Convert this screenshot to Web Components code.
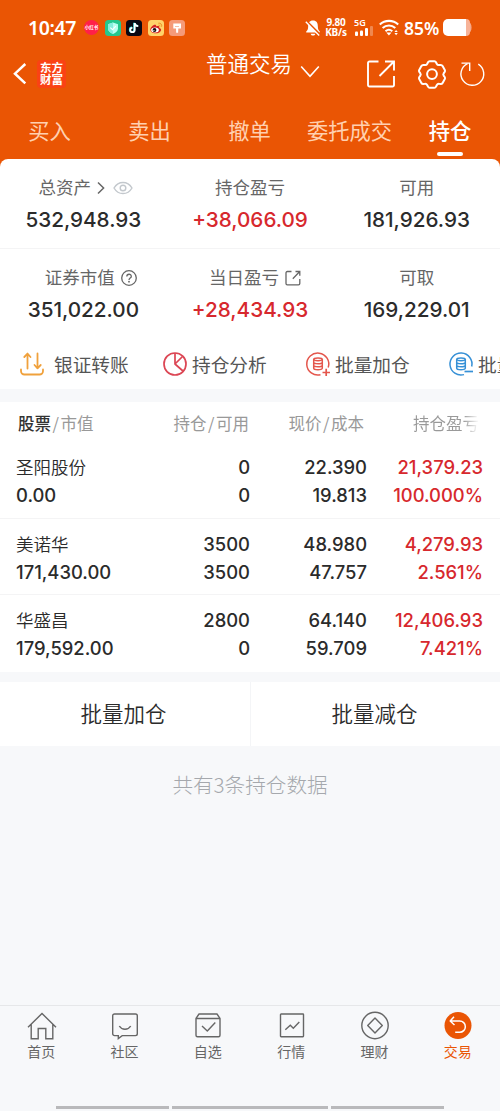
<!DOCTYPE html>
<html lang="zh-CN">
<head>
<meta charset="UTF-8">
<meta name="viewport" content="width=device-width, initial-scale=1.0">
<title>普通交易 - 持仓</title>
<style>
  body {
    margin: 0;
    background: #f7f8fa;
    font-family: "Noto Sans CJK SC", sans-serif;
  }
</style>
</head>
<body>
<trade-app></trade-app>

<script>
// Semua ikon SVG: [viewBox width, viewBox height, isi]
const ICONS = {
  redbook: [15, 15, `<circle cx="7.5" cy="7.5" r="7.5" fill="#ff2049"/>`],
  shield: [16, 16, `<rect width="16" height="16" rx="3.5" fill="#25c78d"/><path d="M8 2.6l5 1.6v4c0 3-2.300 4.700-5 5.700-2.700-1-5-2.700-5-5.700v-4z" fill="#b9fff0"/><path d="M8 2.600v11.300c-2.700-1-5-2.700-5-5.700v-4z" fill="#86eedd"/><path d="M5.300 7.600l2.300 2 3.200-3.400" fill="none" stroke="#fff" stroke-width="1.200"/>`],
  tiktok: [16, 16, `<rect width="16" height="16" rx="3.5" fill="#0a0712"/><path d="M8.700 3v7a2.200 2.200 0 1 1-2.200-2.200M8.700 3.200c.3 1.800 1.500 2.900 3.600 3" fill="none" stroke="#39e5e5" stroke-width="1.900" transform="translate(-.5 -.3)"/><path d="M8.700 3v7a2.200 2.200 0 1 1-2.200-2.200M8.700 3.200c.3 1.800 1.500 2.900 3.600 3" fill="none" stroke="#fff" stroke-width="1.800"/>`],
  weibo: [16, 16, `<rect width="16" height="16" rx="3.5" fill="#ffd36b"/><path d="M2.300 9.500c0-2.300 3.500-5.500 5.200-4.700.8.300.6 1.200.5 1.700 1.600-.7 3.600-.6 3.200 1.200 4 1.500 1.300 5.600-3.600 5.600-3 0-5.300-1.500-5.300-3.800z" fill="#d52420"/><ellipse cx="7" cy="9.900" rx="3.900" ry="2.500" fill="#fff"/><circle cx="6.500" cy="10" r="1.900" fill="#171010"/><circle cx="5.900" cy="10.500" r=".6" fill="#fff"/><path d="M10.300 3.200c2.300-.4 3.900 1.300 3.300 3.500M10.500 5.100c1-.2 1.600.5 1.400 1.400" fill="none" stroke="#eb9228" stroke-width="1"/>`],
  brush: [16, 16, `<rect width="16" height="16" rx="3.500" fill="#f59a79"/><path d="M4.300 3.500h7.700v5H9.300l-.2 4.300H7.200L7 8.500H4.300z" fill="#fff"/><path d="M6 6.500h4" stroke="#f6ad92" stroke-width=".8"/>`],
  bell: [16, 18, `<path d="M8 1.600c-3.500 0-4.800 2.500-4.800 5.300 0 3.500-1 4.600-2 5.700v1h13.600v-1c-1-1.100-2-2.200-2-5.700 0-2.800-1.300-5.300-4.800-5.300zM5.600 14.700h4.800c-.4 1.300-1.200 1.900-2.400 1.900s-2-.6-2.400-1.900z" fill="#fff"/><path d="M1.200 1.800l14 14" stroke="#ea5504" stroke-width="2"/><path d="M.8 2.800l13.400 13.600" stroke="#fff" stroke-width="1.400"/>`],
  signal: [20, 9, `<g fill="#fff"><rect x="1" y="4.500" width="3" height="4.500" rx="1"/><rect x="6" y="3.500" width="3" height="5.500" rx="1"/><rect x="11" y="1" width="3" height="8" rx="1"/><rect x="16" y="-1" width="3" height="10" rx="1" opacity=".3"/></g>`],
  wifi: [20, 17, `<g fill="none" stroke="#fff" stroke-width="2.100"><path d="M.8 5.500c5.200-4.800 13.200-4.800 18.400 0M3.600 9c3.700-3.300 9-3.300 12.700 0"/><path d="M6.500 12.200c2-1.700 4.800-1.700 6.800 0"/></g><path d="M7.300 13.600h5.200l-2.600 2.900zM15.400 13.100l1.700-2 1.700 2zM15.400 14.100h3.400l-1.700 2.100z" fill="#fff"/>`],
  battery: [29, 17, `<path d="M25.500 3.500l2 .7c1.400 2.600 1.400 6 0 8.600l-2 .7z" fill="#f5a98a"/><rect x="19" width="8" height="17" rx="4" fill="#f7b398"/><path d="M5 0h18v17H5a5 5 0 0 1-5-5V5a5 5 0 0 1 5-5z" fill="#fff"/>`],
  back: [14, 24, `<path d="M12.300 2L2 11.700l10.300 9.600" fill="none" stroke="#fff" stroke-width="2.500"/>`],
  down: [20, 13, `<path d="M1.200 1.500l8.800 9.700 8.800-9.700" fill="none" stroke="#fff" stroke-width="1.600"/>`],
  share: [28, 28, `<g fill="none" stroke="#fff" stroke-width="1.900"><path d="M11.500 1.500h-9a1.500 1.500 0 0 0-1.500 1.500v22a1.500 1.500 0 0 0 1.500 1.500h23a1.500 1.500 0 0 0 1.500-1.500v-9"/><path d="M18 1.500h9v9M26.500 2L12.500 16"/></g>`],
  gear: [30, 28, `<g fill="none" stroke="#fff" stroke-width="2" stroke-linejoin="round"><path d="M11 2.300c.4-.8.800-1.100 1.600-1.100h4.800c.8 0 1.200.3 1.600 1.100l.7 1.400c.5 1 1.300 1.500 2.400 1.400l1.700-.1c.9 0 1.400.3 1.800 1l2.200 3.900c.4.8.4 1.300-.1 2l-.9 1.200c-.7.900-.7 1.800 0 2.700l.9 1.200c.5.700.5 1.200.1 2l-2.200 3.900c-.4.700-.9 1-1.800 1l-1.700-.1c-1.100-.1-1.900.4-2.400 1.400l-.7 1.400c-.4.800-.8 1.100-1.600 1.100h-4.800c-.8 0-1.200-.3-1.600-1.100l-.7-1.400c-.5-1-1.300-1.500-2.400-1.400l-1.700.1c-.9 0-1.400-.3-1.800-1l-2.200-3.900c-.4-.8-.4-1.300.1-2l.9-1.200c.7-.9.700-1.800 0-2.700l-.9-1.200c-.5-.7-.5-1.200-.1-2l2.200-3.900c.4-.7.900-1 1.800-1l1.700.1c1.100.1 1.900-.4 2.400-1.400z"/><circle cx="15" cy="14.100" r="4.900"/></g>`],
  reload: [26, 26, `<g fill="none" stroke="#fff" stroke-width="1.400"><path d="M19.300 3.200A11.400 11.400 0 1 1 8.500 2.600"/><path d="M2.500 2.100h8.200v8"/></g>`],
  arrow: [8, 14, `<path d="M1 1.500l5.600 5.500L1 12.500" fill="none" stroke="#666" stroke-width="1.500"/>`],
  eye: [20, 14, `<g fill="none" stroke="#c3c8cd" stroke-width="1.400"><path d="M1 7c4.400-7.400 13.600-7.400 18 0-4.400 7.400-13.600 7.400-18 0z"/><circle cx="10" cy="7" r="2.800"/></g>`],
  help: [16, 16, `<g fill="none" stroke="#666" stroke-width="1.300"><circle cx="8" cy="8" r="7.300"/><path d="M5.800 6.500c0-3 4.500-3 4.500-.1 0 1.700-2.300 1.700-2.300 3.500"/></g><circle cx="8" cy="11.700" r=".9" fill="#666"/>`],
  open: [16, 16, `<g fill="none" stroke="#666" stroke-width="1.300"><path d="M6.500 1.500H2.300A1.300 1.300 0 0 0 1 2.800v10.700a1.300 1.300 0 0 0 1.300 1.300h11.200a1.300 1.300 0 0 0 1.300-1.300V9"/><path d="M10.500 1.500h4.300v4.200M14.500 1.800L7.800 8.700"/></g>`],
  transfer: [24, 24, `<g fill="none" stroke="#f0a13c" stroke-width="1.800" stroke-linecap="round" stroke-linejoin="round"><path d="M1 17.500v1.600A3.400 3.400 0 0 0 4.400 22.500h15.200a3.400 3.400 0 0 0 3.400-3.400v-1.600"/><path d="M7.500 16.500V1.700L4.300 5M7.500 1.700L10.500 5M17.500 1.500v14.800M14.500 13l3 3.300 3.200-3.300"/></g>`],
  pie: [24, 24, `<g fill="none" stroke="#dc4654" stroke-width="1.700"><circle cx="12" cy="12" r="11"/><path d="M12 1v11l8.500 7.500M12 12l7.500-7.500" stroke-linejoin="round"/></g>`],
  plus: [24, 24, `<g fill="none" stroke="#e4564c" stroke-width="1.500"><path d="M22.200 15.500A11 11 0 1 0 14.500 22.700"/><ellipse cx="12" cy="7.300" rx="4.300" ry="1.400"/><path d="M7.700 7.300v8.900c0 2 8.600 2 8.600 0V7.300M7.700 10.300c0 2 8.600 2 8.600 0M7.700 13.300c0 2 8.600 2 8.600 0"/><path d="M16.500 20.500h7.500M20.200 16.800v7.200" stroke-width="1.700"/></g>`],
  minus: [24, 24, `<g fill="none" stroke="#3690d6" stroke-width="1.500"><path d="M22.700 14.500A11 11 0 1 0 15 22.600"/><ellipse cx="12" cy="7.300" rx="4.300" ry="1.400"/><path d="M7.700 7.300v8.900c0 2 8.600 2 8.600 0V7.300M7.700 10.300c0 2 8.600 2 8.600 0M7.700 13.300c0 2 8.600 2 8.600 0"/><path d="M15.500 19.500H24" stroke-width="1.700"/></g>`],
  home: [30, 28, `<path d="M1 15.200L15 1.500l14 13.700M4.200 12.500v14.300h7V16.500h7.600v10.300h7V12.500" fill="none" stroke="#666" stroke-width="1.400"/>`],
  chat: [30, 28, `<g fill="none" stroke="#666" stroke-width="1.400"><path d="M4.500 2h21A1.800 1.800 0 0 1 27.300 3.800v18a1.800 1.800 0 0 1-1.800 1.800H12.200L8.300 26.500V23.600H4.500a1.800 1.800 0 0 1-1.800-1.800v-18A1.800 1.800 0 0 1 4.500 2z"/><path d="M9.300 14c2.700 4.400 8.700 4.400 11.400 0"/></g>`],
  pick: [30, 28, `<g fill="none" stroke="#666" stroke-width="1.400" stroke-linejoin="round"><path d="M3 6.500L6 2h18l3 4.500v16.700a1.500 1.500 0 0 1-1.500 1.500h-21A1.500 1.500 0 0 1 3 23.200z"/><path d="M3 6.500h24M9 14l5.300 5 8-8.500"/></g>`],
  chart: [30, 28, `<g fill="none" stroke="#666" stroke-width="1.400"><rect x="3.500" y="2" width="23" height="22.700" rx=".6"/><path d="M8.300 17.800l5-4.500 3 3 6-6.300"/></g>`],
  money: [30, 28, `<g fill="none" stroke="#666" stroke-width="1.400"><circle cx="15" cy="13.500" r="13.200"/><path d="M15 6l7.300 7.500L15 21l-7.300-7.500z" stroke-linejoin="round"/></g>`],
  trade: [30, 28, `<circle cx="15" cy="13.500" r="13.500" fill="#ea5504"/><path d="M11 4.800L7.200 9l4.300 4M7.500 9h9.200a5.600 5.600 0 0 1 0 11.300h-4.500" fill="none" stroke="#fff" stroke-width="1.500" stroke-linejoin="round"/>`],
};

// Ikon
class UiIcon extends HTMLElement {
  connectedCallback() {
    const [w, h, body] = ICONS[this.getAttribute('name')];
    this.attachShadow({ mode: 'open' }).innerHTML = `
      <style>
        :host { display: block; flex: none; width: ${w}px; height: ${h}px; }
        svg { display: block; overflow: visible; }
      </style>
      <svg width="${w}" height="${h}" viewBox="0 0 ${w} ${h}">${body}</svg>
    `;
  }
}
customElements.define('ui-icon', UiIcon);

// Status bar
class StatusBar extends HTMLElement {
  connectedCallback() {
    this.attachShadow({ mode: 'open' }).innerHTML = `
      <style>
        :host {
          display: flex;
          align-items: center;
          height: 55px;
          padding: 0 28px;
          box-sizing: border-box;
          color: #fff;
          font-family: "Noto Sans", "Noto Sans CJK SC", sans-serif;
          font-weight: 600;
        }
        .time { width: 56px; font-size: 19.5px; letter-spacing: -.4px; line-height: 24px; }
        .apps { display: flex; align-items: center; gap: 5.500px; flex: 1; }
        .red { display: grid; place-items: center; }
        .red > * { grid-area: 1 / 1; }
        .red span { font-size: 4.500px; line-height: 5px; z-index: 1; font-weight: 700; }
        .speed { width: 22px; margin-left: 4px; font-size: 10px; line-height: 9.500px; text-align: center; font-weight: 700; white-space: nowrap; letter-spacing: -.2px; }
        .net { width: 20px; margin: 0 5px 0 7px; font-size: 9px; line-height: 8px; }
        .pct { width: 39px; margin-left: 5px; font-size: 17.500px; line-height: 24px; }
      </style>
      <span class="time">10:47</span>
      <div class="apps">
        <div class="red"><ui-icon name="redbook"></ui-icon><span>小红书</span></div>
        <ui-icon name="shield"></ui-icon>
        <ui-icon name="tiktok"></ui-icon>
        <ui-icon name="weibo"></ui-icon>
        <ui-icon name="brush"></ui-icon>
      </div>
      <ui-icon name="bell"></ui-icon>
      <div class="speed"><div>9.80</div><div>KB/s</div></div>
      <div class="net">5G<ui-icon name="signal"></ui-icon></div>
      <ui-icon name="wifi"></ui-icon>
      <span class="pct">85%</span>
      <ui-icon name="battery"></ui-icon>
    `;
  }
}
customElements.define('status-bar', StatusBar);

// Judul halaman
class TitleBar extends HTMLElement {
  connectedCallback() {
    this.attachShadow({ mode: 'open' }).innerHTML = `
      <style>
        :host {
          display: grid;
          grid-template-columns: 193px auto 1fr;
          height: 50px;
          padding: 0 15px 0 13px;
          color: #fff;
        }
        .left, .right { display: flex; align-items: center; height: 37px; }
        .logo {
          width: 29px;
          height: 28px;
          margin-left: 10px;
          background: #fa4214;
          border-radius: 4px;
          font: 700 11.500px/12.500px "Noto Sans CJK SC", sans-serif;
          text-align: center;
          padding-top: 1px;
          box-sizing: border-box;
        }
        .title { display: flex; align-items: center; gap: 8px; height: 16px; font-size: 21.500px; line-height: 20px; font-weight: 350; }
        .title ui-icon { margin-top: 16px; }
        .right { justify-content: flex-end; }
        .right ui-icon:nth-child(2) { margin: 0 12px 0 22px; }
      </style>
      <div class="left"><ui-icon name="back"></ui-icon><div class="logo"><div>东方</div><div>财富</div></div></div>
      <div class="title"><span>普通交易</span><ui-icon name="down"></ui-icon></div>
      <div class="right"><ui-icon name="share"></ui-icon><ui-icon name="gear"></ui-icon><ui-icon name="reload"></ui-icon></div>
    `;
  }
}
customElements.define('title-bar', TitleBar);

// Tab transaksi
class TradeTabs extends HTMLElement {
  connectedCallback() {
    const tabs = ['买入', '卖出', '撤单', '委托成交', '持仓'];
    this.attachShadow({ mode: 'open' }).innerHTML = `
      <style>
        :host { display: grid; grid-template-columns: repeat(5, 1fr); height: 54px; }
        div {
          display: flex;
          flex-direction: column;
          align-items: center;
          padding: 10px 1px 0 0;
          color: #ffd0b0;
          font-size: 21.300px;
          line-height: 30px;
          white-space: nowrap;
        }
        .active { color: #fff; font-weight: 500; padding-right: 0; }
        .active::after { content: ""; width: 26px; height: 4px; margin-top: 7px; border-radius: 2px; background: #fff; }
      </style>
      ${tabs.map((tab, i) => `<div class="${i === 4 ? 'active' : ''}">${tab}</div>`).join('')}
    `;
  }
}
customElements.define('trade-tabs', TradeTabs);

// Satu angka ringkasan, ikon tambahan lewat slot
class AssetCell extends HTMLElement {
  connectedCallback() {
    this.attachShadow({ mode: 'open' }).innerHTML = `
      <style>
        :host { display: block; text-align: center; color: #2b2b2b; }
        :host([up]) { color: #d7282d; }
        .label {
          display: flex;
          align-items: center;
          justify-content: center;
          gap: 6px;
          height: 26px;
          padding-left: var(--shift, 0);
          color: #666;
          font-size: 17.500px;
          line-height: 26px;
        }
        .label span { margin-top: -2px; }
        .value { font: 500 20.700px/26px Inter, sans-serif; margin-top: 6px; }
      </style>
      <div class="label"><span>${this.getAttribute('label')}</span><slot></slot></div>
      <div class="value">${this.getAttribute('value')}</div>
    `;
  }
}
customElements.define('asset-cell', AssetCell);

// Ringkasan aset
class AssetSummary extends HTMLElement {
  connectedCallback() {
    this.attachShadow({ mode: 'open' }).innerHTML = `
      <style>
        :host { display: block; background: #fff; border-radius: 8px 8px 0 0; }
        .row { display: grid; grid-template-columns: repeat(3, 1fr); height: 73px; padding-top: 16px; border-bottom: 1px solid #f4f4f5; }
        .row + .row { height: 75.500px; padding-top: 15.500px; border: 0; }
        .eye { margin-left: 2px; }
        .total { --shift: 5px; }
        .market { --shift: 15px; }
        .today { --shift: 10px; }
      </style>
      <div class="row">
        <asset-cell class="total" label="总资产" value="532,948.93"><ui-icon name="arrow"></ui-icon><ui-icon class="eye" name="eye"></ui-icon></asset-cell>
        <asset-cell up label="持仓盈亏" value="+38,066.09"></asset-cell>
        <asset-cell label="可用" value="181,926.93"></asset-cell>
      </div>
      <div class="row">
        <asset-cell class="market" label="证券市值" value="351,022.00"><ui-icon name="help"></ui-icon></asset-cell>
        <asset-cell class="today" up label="当日盈亏" value="+28,434.93"><ui-icon name="open"></ui-icon></asset-cell>
        <asset-cell label="可取" value="169,229.01"></asset-cell>
      </div>
    `;
  }
}
customElements.define('asset-summary', AssetSummary);

// Menu cepat, item terakhir terpotong di tepi layar
class QuickMenu extends HTMLElement {
  connectedCallback() {
    this.attachShadow({ mode: 'open' }).innerHTML = `
      <style>
        :host {
          display: flex;
          height: 49px;
          padding-left: 20px;
          overflow: hidden;
          background: #fff;
        }
        div {
          flex: 0 0 143px;
          display: flex;
          align-items: center;
          gap: 5px;
          color: #555;
          font-size: 18.700px;
          line-height: 26px;
          white-space: nowrap;
        }
        div:first-of-type { gap: 10px; }
        ui-icon { margin-top: -2px; }
        span { margin-top: -2px; }
      </style>
      <div><ui-icon name="transfer"></ui-icon><span>银证转账</span></div>
      <div><ui-icon name="pie"></ui-icon><span>持仓分析</span></div>
      <div><ui-icon name="plus"></ui-icon><span>批量加仓</span></div>
      <div><ui-icon name="minus"></ui-icon><span>批量减仓</span></div>
    `;
  }
}
customElements.define('quick-menu', QuickMenu);

// Baris saham
class StockRow extends HTMLElement {
  set stock(stock) {
    this.attachShadow({ mode: 'open' }).innerHTML = `
      <style>
        :host {
          display: grid;
          grid-template-columns: 134px 100px 117px 116px;
          grid-template-rows: 28px 28px;
          height: 76.600px;
          padding: 11px 0 0 16px;
          box-sizing: border-box;
          border-bottom: 1px solid #f4f4f5;
          color: #2b2b2b;
          font: 500 18.400px/28px Inter, sans-serif;
          text-align: right;
        }
        :host(:last-child) { border: 0; }
        .name { font: 350 17.500px/27px "Noto Sans CJK SC", sans-serif; }
        .name, .left { text-align: left; }
        .up { color: #d7282d; }
      </style>
      <span class="name">${stock.name}</span>
      <span>${stock.amount}</span>
      <span>${stock.price}</span>
      <span class="up">${stock.profit}</span>
      <span class="left">${stock.value}</span>
      <span>${stock.usable}</span>
      <span>${stock.cost}</span>
      <span class="up">${stock.rate}</span>
    `;
  }
}
customElements.define('stock-row', StockRow);

// Daftar saham
class StockList extends HTMLElement {
  constructor() {
    super();
    this.attachShadow({ mode: 'open' });
  }

  set stocks(stocks) {
    this.shadowRoot.innerHTML = `
      <style>
        :host { display: block; margin-top: 13px; background: #fff; }
        .head {
          display: grid;
          grid-template-columns: 131px 100px 115px 115px;
          height: 40px;
          padding-left: 18px;
          color: #999;
          font-size: 16.500px;
          line-height: 42px;
          text-align: right;
        }
        .head span:first-child { text-align: left; }
        b { color: #333; font-weight: 500; }
        i { font-style: normal; margin: 0 1.500px; }
        .head .fade {
          color: transparent;
          background: linear-gradient(90deg, #999 76%, #fff 100%);
          -webkit-background-clip: text;
          background-clip: text;
        }
      </style>
      <div class="head">
        <span><b>股票</b><i>/</i>市值</span>
        <span>持仓<i>/</i>可用</span>
        <span>现价<i>/</i>成本</span>
        <span><span class="fade">持仓盈亏</span></span>
      </div>
      <div>${stocks.map(() => `<stock-row></stock-row>`).join('')}</div>
    `;

    const rows = this.shadowRoot.querySelectorAll('stock-row');
    stocks.forEach((stock, index) => (rows[index].stock = stock));
  }
}
customElements.define('stock-list', StockList);

// Tombol batch
class BatchActions extends HTMLElement {
  connectedCallback() {
    this.attachShadow({ mode: 'open' }).innerHTML = `
      <style>
        :host { display: grid; grid-template-columns: 1fr 1fr; height: 64px; margin-top: 10.500px; background: #fff; }
        button {
          border: 0;
          padding: 0 3px 2px 0;
          background: none;
          color: #2b2b2b;
          font: 350 21.500px/30px "Noto Sans CJK SC", sans-serif;
        }
        button:last-child { padding: 0 2px 2px 0; border-left: 1px solid #f4f5f7; }
      </style>
      <button>批量加仓</button>
      <button>批量减仓</button>
    `;
  }
}
customElements.define('batch-actions', BatchActions);

// Navigasi bawah
class BottomNav extends HTMLElement {
  connectedCallback() {
    const items = [
      ['home', '首页'],
      ['chat', '社区'],
      ['pick', '自选'],
      ['chart', '行情'],
      ['money', '理财'],
      ['trade', '交易'],
    ];
    this.attachShadow({ mode: 'open' }).innerHTML = `
      <style>
        :host { display: flex; flex-direction: column; height: 106px; box-sizing: border-box; border-top: 1px solid #e6e7e9; }
        nav { display: grid; grid-template-columns: repeat(6, 1fr); flex: 1; }
        nav div {
          display: flex;
          flex-direction: column;
          align-items: center;
          padding-top: 6px;
          color: #666;
          font-size: 14px;
          line-height: 20px;
        }
        nav div ui-icon { margin-bottom: 1px; }
        nav div span { padding-right: 1px; }
        nav div:last-child { color: #ea5504; }
        .bars { display: flex; justify-content: center; gap: 3px; padding: 0 0 2px; }
        .bars span { width: 113px; height: 3px; background: #b9b9bb; }
        .bars span:nth-child(2) { width: 156px; }
      </style>
      <nav>
        ${items.map(([icon, label]) => `<div><ui-icon name="${icon}"></ui-icon><span>${label}</span></div>`).join('')}
      </nav>
      <div class="bars"><span></span><span></span><span></span></div>
    `;
  }
}
customElements.define('bottom-nav', BottomNav);

// Data saham
const stocksData = [
  { name: '圣阳股份', value: '0.00', amount: '0', usable: '0', price: '22.390', cost: '19.813', profit: '21,379.23', rate: '100.000%' },
  { name: '美诺华', value: '171,430.00', amount: '3500', usable: '3500', price: '48.980', cost: '47.757', profit: '4,279.93', rate: '2.561%' },
  { name: '华盛昌', value: '179,592.00', amount: '2800', usable: '0', price: '64.140', cost: '59.709', profit: '12,406.93', rate: '7.421%' },
];

// Render Aplikasi
class TradeApp extends HTMLElement {
  connectedCallback() {
    this.attachShadow({ mode: 'open' }).innerHTML = `
      <style>
        :host { display: flex; flex-direction: column; height: 1111px; overflow: hidden; }
        .top { background: #ea5504; }
        .total { margin: 23px 0 0; color: #a5a8ad; text-align: center; font-size: 20.600px; line-height: 30px; font-weight: 300; flex: 1; }
      </style>
      <div class="top">
        <status-bar></status-bar>
        <title-bar></title-bar>
        <trade-tabs></trade-tabs>
        <asset-summary></asset-summary>
      </div>
      <quick-menu></quick-menu>
      <stock-list></stock-list>
      <batch-actions></batch-actions>
      <p class="total">共有${stocksData.length}条持仓数据</p>
      <bottom-nav></bottom-nav>
    `;
    this.shadowRoot.querySelector('stock-list').stocks = stocksData;
  }
}
customElements.define('trade-app', TradeApp);
</script>
</body>
</html>
